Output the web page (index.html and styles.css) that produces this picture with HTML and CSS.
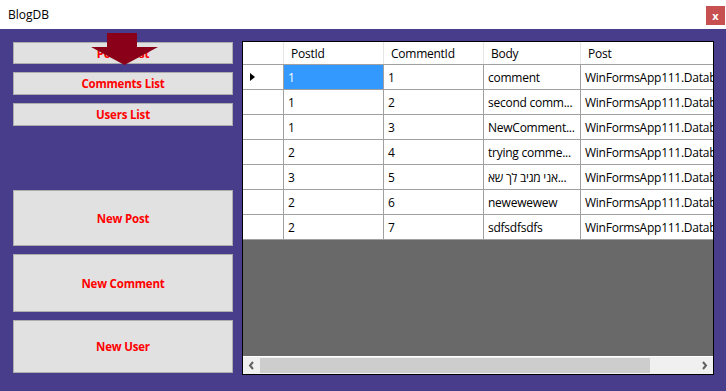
FILE: index.html
```html
<!DOCTYPE html>
<html lang="en">
<head>
  <meta charset="UTF-8">
  <title>BlogDB</title>
  <link rel="stylesheet" href="styles.css">
</head>
<body>

<div class="titlebar">
  <span class="title">BlogDB</span>
  <span class="close">x</span>
</div>

<div class="main">
  <div class="side">
    <button class="btn list first">Posts List</button>
    <button class="btn list">Comments List</button>
    <button class="btn list">Users List</button>
    <button class="btn big new-post">New Post</button>
    <button class="btn big new-comment">New Comment</button>
    <button class="btn big new-user">New User</button>
    <svg class="arrow" width="68" height="33" viewBox="0 0 68 33">
      <polygon points="16,0 46,0 46,14 67,14 33.5,32 0,14 16,14" fill="#8a0019"/>
    </svg>
  </div>

  <div class="grid">
    <div class="row head">
      <div class="cell rh"></div>
      <div class="cell c1">PostId</div>
      <div class="cell c2">CommentId</div>
      <div class="cell c3">Body</div>
      <div class="cell c4">Post</div>
    </div>
    <div id="rows"></div>
    <div class="empty"></div>
    <div class="hscroll">
      <svg class="sarrow" width="17" height="17" viewBox="0 0 17 17"><path d="M10 5 L7 8.5 L10 12" stroke="#606060" stroke-width="2" fill="none"/></svg>
      <div class="track"><div class="thumb"></div></div>
      <svg class="sarrow" width="17" height="17" viewBox="0 0 17 17"><path d="M7 5 L10 8.5 L7 12" stroke="#606060" stroke-width="2" fill="none"/></svg>
    </div>
  </div>
</div>

<script>
  const comments = [
    { postId: 1, commentId: 1, body: 'comment' },
    { postId: 1, commentId: 2, body: 'second comm...' },
    { postId: 1, commentId: 3, body: 'NewComment...' },
    { postId: 2, commentId: 4, body: 'trying comme...' },
    { postId: 3, commentId: 5, body: 'אני מגיב לך שא...' },
    { postId: 2, commentId: 6, body: 'newewewew' },
    { postId: 2, commentId: 7, body: 'sdfsdfsdfs' }
  ];

  const rows = document.getElementById('rows');
  comments.forEach((c, i) => {
    const first = i === 0;
    rows.innerHTML += `<div class="row">
      <div class="cell rh">${first ? '<span class="cur"></span>' : ''}</div>
      <div class="cell c1${first ? ' sel' : ''}">${c.postId}</div>
      <div class="cell c2">${c.commentId}</div>
      <div class="cell c3"><span>${c.body}</span></div>
      <div class="cell c4">WinFormsApp111.Database.Post</div>
    </div>`;
  });
</script>

</body>
</html>
```

FILE: styles.css
```css
body {
  margin: 0;
  padding: 0;
  width: 726px;
  height: 391px;
  overflow: hidden;
  background-color: #483d8b;
  font-family: "Open Sans", "Liberation Sans", sans-serif;
  font-size: 12px;
}
.titlebar {
  height: 29px;
  background: white;
  display: flex;
  align-items: center;
  justify-content: space-between;
}
.title {
  margin-left: 8px;
  margin-top: -1px;
  color: #000;
}
.close {
  width: 19px;
  height: 19px;
  margin-right: 1px;
  margin-top: 2px;
  background: #c75050;
  color: white;
  font-weight: bold;
  font-size: 11px;
  display: flex;
  align-items: center;
  justify-content: center;
  line-height: 1;
}
.main {
  display: flex;
  align-items: flex-start;
}
.side {
  position: relative;
  width: 220px;
  padding: 13px 0 0 13px;
  display: flex;
  flex-direction: column;
}
.btn {
  box-sizing: border-box;
  width: 220px;
  margin: 0;
  padding: 0;
  background: #e1e1e1;
  border: 1px solid #adadad;
  color: #ff0000;
  font-family: "Open Sans", "Liberation Sans", sans-serif;
  font-size: 11.5px;
  font-weight: bold;
  letter-spacing: -0.2px;
}
.list {
  height: 23px;
  margin-top: 8px;
}
.list.first {
  height: 22px;
  margin-top: 0;
}
.big {
  margin-top: 8px;
}
.new-post {
  height: 56px;
  margin-top: 64px;
}
.new-comment {
  height: 58px;
}
.new-user {
  height: 53px;
}
.arrow {
  position: absolute;
  left: 91px;
  top: 4px;
}
.grid {
  box-sizing: border-box;
  width: 472px;
  height: 334px;
  margin: 12px 0 0 9px;
  border: 1px solid #000;
  background: #696969;
  overflow: hidden;
  display: flex;
  flex-direction: column;
}
.row {
  display: flex;
  height: 25px;
  box-sizing: border-box;
  border-bottom: 1px solid #a0a0a0;
  background: white;
  flex-shrink: 0;
}
.row.head {
  height: 23px;
}
.cell {
  box-sizing: border-box;
  flex-shrink: 0;
  border-right: 1px solid #a0a0a0;
  padding-left: 4px;
  display: flex;
  align-items: center;
  white-space: nowrap;
  overflow: hidden;
  color: #000;
  letter-spacing: -0.25px;
}
.head .cell {
  border-right-color: #e5e5e5;
  padding-left: 7px;
}
.rh {
  width: 41px;
  padding-left: 0;
}
.c1 {
  width: 100px;
}
.c2 {
  width: 100px;
}
.c3 {
  width: 97px;
}
.c4 {
  width: 170px;
  border-right: none;
}
.sel {
  background: #3399ff;
  color: white;
}
.cur {
  width: 0;
  height: 0;
  margin-left: 7px;
  border-top: 4.5px solid transparent;
  border-bottom: 4.5px solid transparent;
  border-left: 5px solid #000;
}
.empty {
  flex: 1;
}
.hscroll {
  height: 17px;
  flex-shrink: 0;
  display: flex;
  background: #f0f0f0;
  border-top: 1px solid #fff;
}
.sarrow {
  flex-shrink: 0;
}
.track {
  flex: 1;
  padding: 1px 0;
  display: flex;
}
.thumb {
  width: 390px;
  background: #cdcdcd;
}
```
